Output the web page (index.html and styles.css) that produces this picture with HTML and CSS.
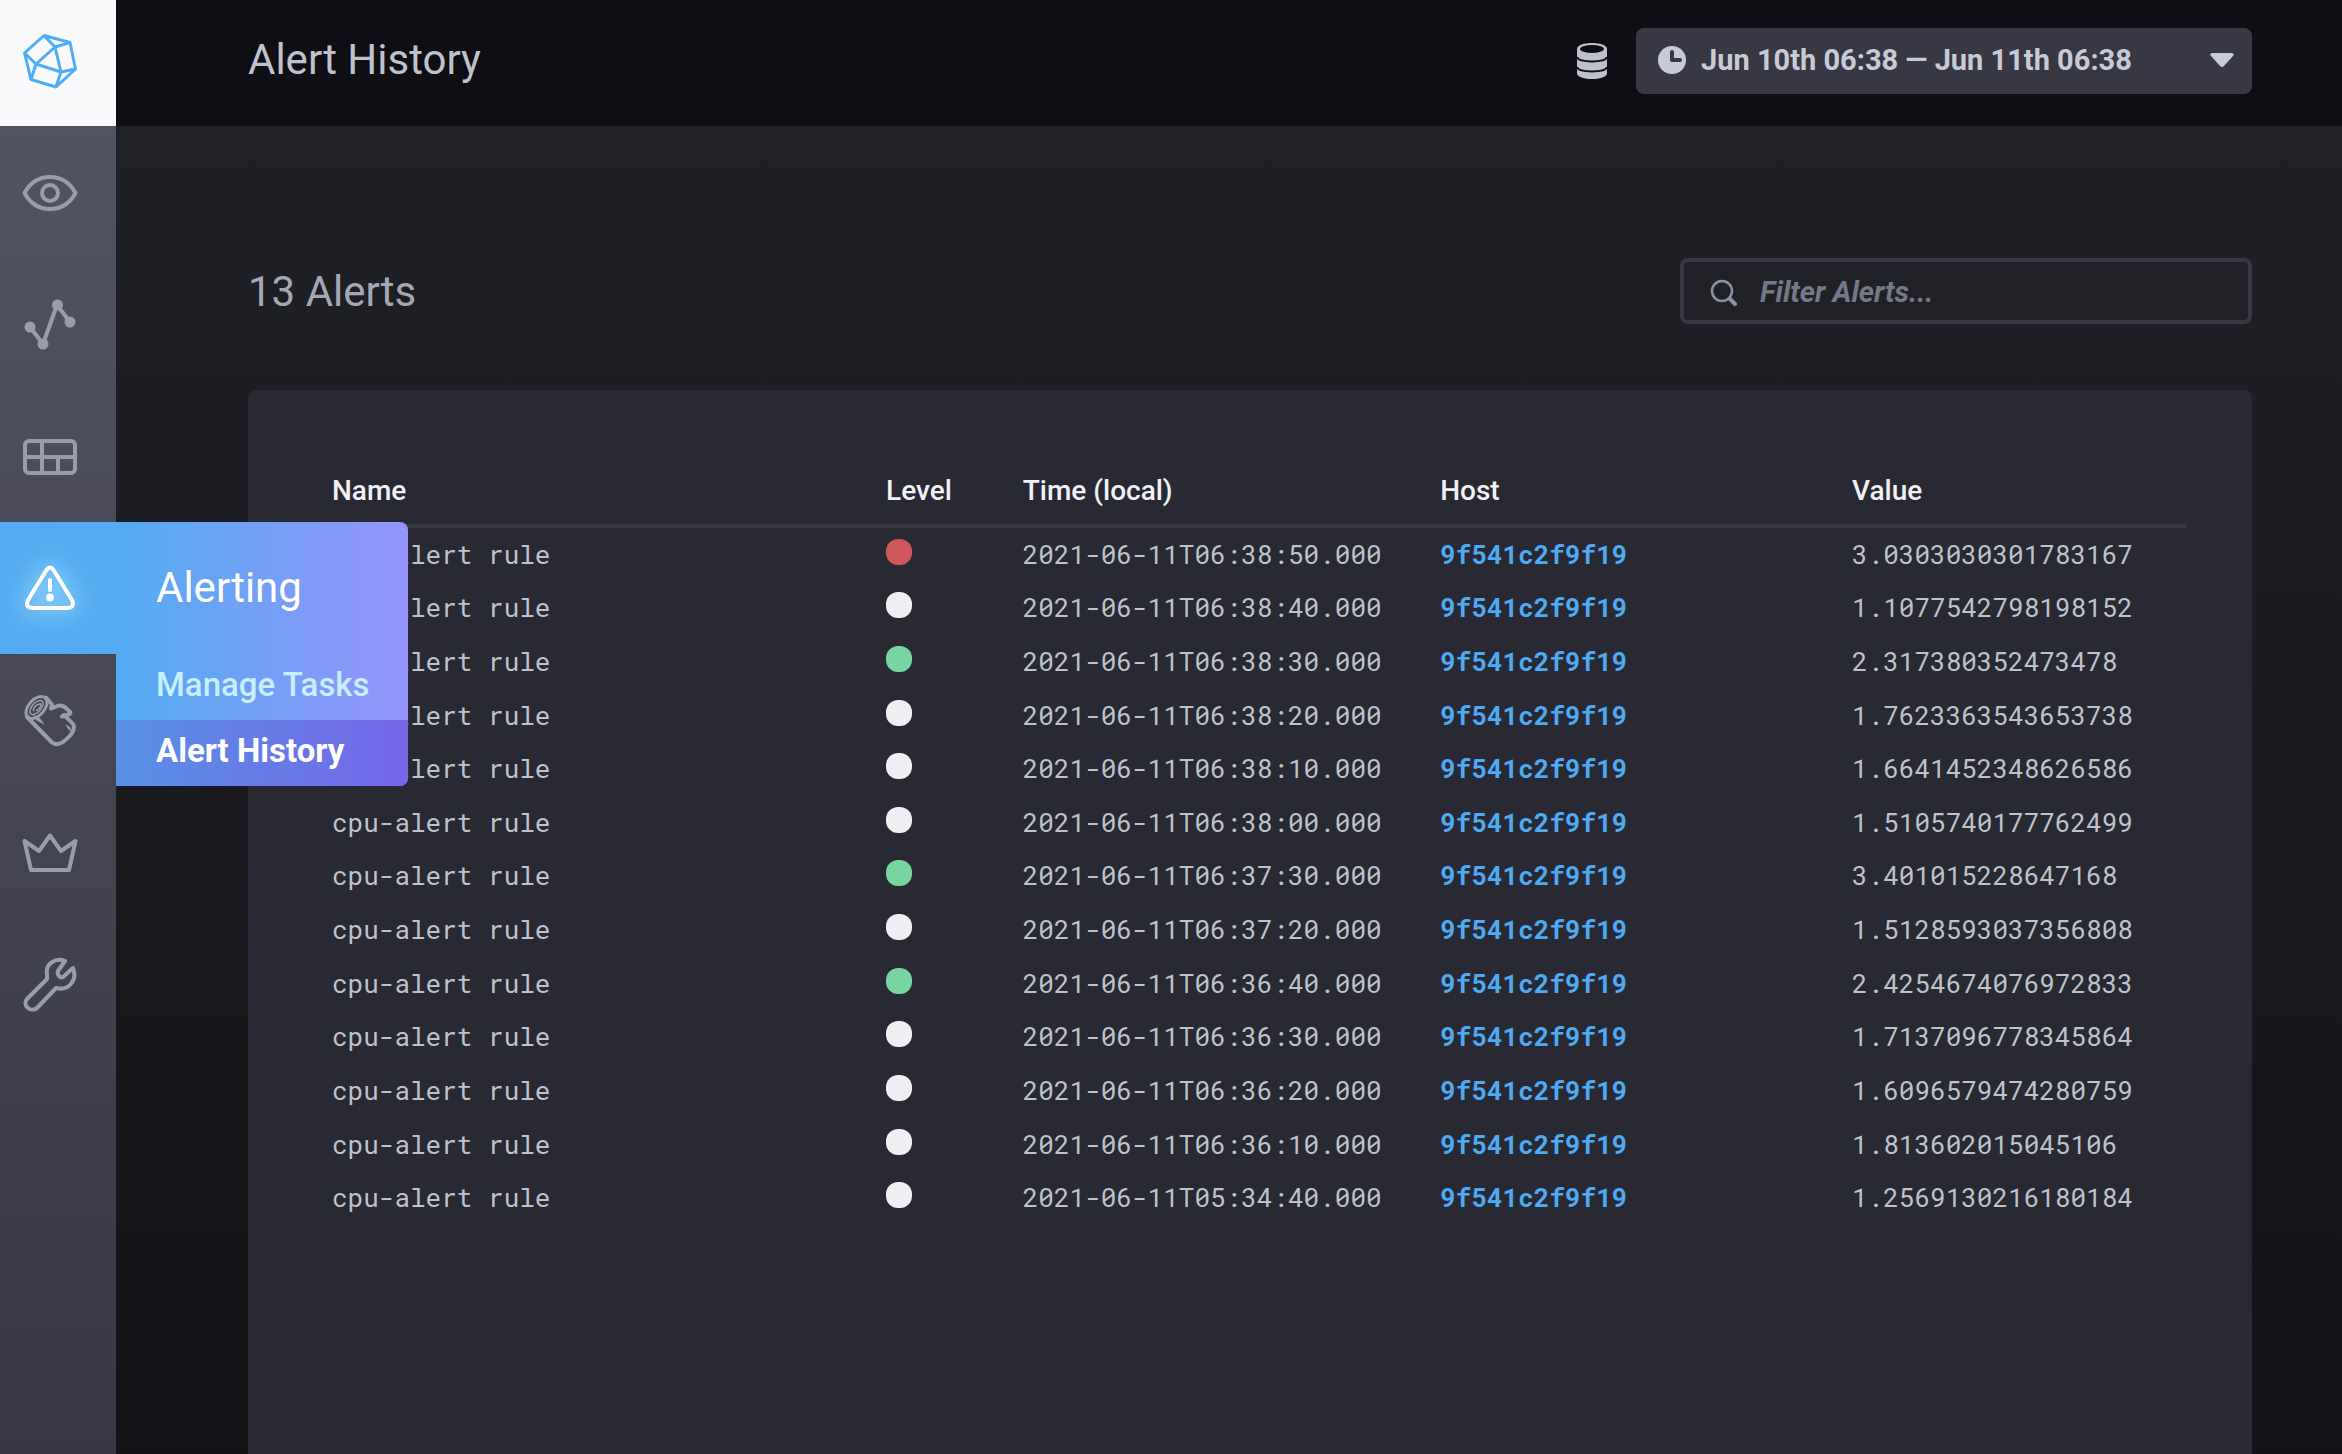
FILE: index.html
```html
<!DOCTYPE html>
<html lang="en">
<head>
<meta charset="utf-8">
<title>Alert History</title>
<link rel="stylesheet" href="styles.css">
</head>
<body>
<div class="app">
  <nav class="sidebar" aria-label="Main">
    <a class="logo" href="#" aria-label="Home">
      <svg class="icon" viewBox="0 0 56 56" fill="none" stroke="currentColor" stroke-width="3" stroke-linejoin="round">
        <path d="M22 2.500L48 9.500L53.500 36L34 54L9 46.500L2.500 20Z"/>
        <path d="M22 2.500L33 14L48 9.500M33 14L39 39L53.500 36M39 39L34 54M39 39L14 31L9 46.500M14 31L2.500 20M14 31L33 14"/>
      </svg>
    </a>
    <div class="nav-item">
      <a class="nav-link" href="#" aria-label="Hosts">
        <svg class="icon" viewBox="0 0 56 56" fill="none" stroke="currentColor" stroke-width="4" stroke-linejoin="round">
          <path d="M2.500 28C8 18 17 12 28 12S48 18 53.500 28C48 38 39 44 28 44S8 38 2.500 28Z"/>
          <circle cx="28" cy="28" r="8"/>
        </svg>
      </a>
    </div>
    <div class="nav-item">
      <a class="nav-link" href="#" aria-label="Explore">
        <svg class="icon" viewBox="0 0 56 56" fill="currentColor" stroke="currentColor" stroke-width="3">
          <path fill="none" d="M8 30L21 47L35 8L48 25" stroke-width="4"/>
          <circle cx="8" cy="30" r="4"/><circle cx="21" cy="47" r="4"/><circle cx="35.500" cy="8" r="4"/><circle cx="48" cy="25" r="4"/>
        </svg>
      </a>
    </div>
    <div class="nav-item">
      <a class="nav-link" href="#" aria-label="Dashboards">
        <svg class="icon" viewBox="0 0 56 56" fill="none" stroke="currentColor" stroke-width="4">
          <rect x="3" y="12" width="50" height="32" rx="4"/>
          <path d="M3 28H53M20 12V44M36 28V44"/>
        </svg>
      </a>
    </div>
    <div class="nav-item nav-item-active">
      <a class="nav-link" href="#" aria-label="Alerting">
        <svg class="icon" viewBox="0 0 56 56" fill="none" stroke="currentColor" stroke-width="4" stroke-linecap="round" stroke-linejoin="round">
          <path d="M24.500 9Q28 4 31.500 9L50 39Q53 46 46 47H10Q3 46 6 39Z"/>
          <path d="M28 19V29"/><circle cx="28" cy="36.500" r="2"/>
        </svg>
      </a>
      <div class="menu">
        <a class="menu-title" href="#">Alerting</a>
        <a class="menu-link" href="#">Manage Tasks</a>
        <a class="menu-link menu-link-active" href="#" aria-current="page">Alert History</a>
      </div>
    </div>
    <div class="nav-item">
      <a class="nav-link" href="#" aria-label="Log Viewer">
        <svg class="icon" viewBox="0 0 56 56" fill="none" stroke="currentColor" stroke-width="4" stroke-linejoin="round">
          <path d="M5 24L30 49.500Q34 53 41 49Q52 41 52 34Q52 31 46 26L42 22" stroke-linecap="round"/>
          <path d="M24 4.500L30 11.500L29 15.500L37 12.500Q41 12 45 16Q50 20 47.500 21L40 23.500" stroke-linecap="round"/>
          <ellipse cx="14.500" cy="14.500" rx="13" ry="8" transform="rotate(-48 14.500 14.500)" stroke-width="3"/>
          <ellipse cx="14.500" cy="14.500" rx="8.500" ry="4.500" transform="rotate(-48 14.500 14.500)" stroke-width="1.500"/>
          <path d="M12 18C10 17 14 10 19 11C19 14 16 18 14 17" stroke-width="1.500"/>
          <path d="M11 22L17 24L23 32L14 27ZM43 31L48 34L50 39L46 36Z" fill="currentColor" stroke="none"/>
        </svg>
      </a>
    </div>
    <div class="nav-item">
      <a class="nav-link" href="#" aria-label="Admin">
        <svg class="icon" viewBox="0 0 56 56" fill="none" stroke="currentColor" stroke-width="4" stroke-linejoin="round">
          <path d="M2.500 16L17 26L28 10.500L39 26L53.500 16L47 45H9Z"/>
        </svg>
      </a>
    </div>
    <div class="nav-item">
      <a class="nav-link" href="#" aria-label="Configuration">
        <svg class="icon" viewBox="0 0 56 56" fill="none" stroke="currentColor" stroke-width="4" stroke-linecap="round" stroke-linejoin="round">
          <path d="M43 4C34 0 23 7 25 17V22L5 42C0 48 8 56 15 51L34 31C46 34 56 24 51 11L41 20Q39 21 37 19Q35 17 36 14Z"/>
        </svg>
      </a>
    </div>
  </nav>

  <main class="page">
    <header class="page-header">
      <h1 class="page-title">Alert History</h1>
      <div class="page-tools">
        <button class="source-button" type="button" aria-label="Sources">
          <svg class="source-icon" viewBox="0 0 32 36">
            <path fill="currentColor" d="M1 6C1 -2 31 -2 31 6V30C31 38 1 38 1 30Z"/>
            <ellipse class="source-cut" cx="16" cy="6" rx="12" ry="4"/>
            <path class="source-line" d="M1 14C3 20 29 20 31 14M1 24C3 30 29 30 31 24"/>
          </svg>
        </button>
        <button class="range-button" type="button">
          <svg class="range-icon" viewBox="0 0 28 28"><circle cx="14" cy="14" r="14" fill="currentColor"/><path class="range-hands" d="M14 6V14H22"/></svg>
          <span class="range-text">Jun 10th 06:38 — Jun 11th 06:38</span>
          <svg class="caret" viewBox="0 0 24 14"><path fill="currentColor" d="M2 0H22Q25 1 23 3L14 13Q12 15 10 13L1 3Q-1 1 2 0Z"/></svg>
        </button>
      </div>
    </header>

    <section class="content">
      <div class="content-bar">
        <h2 class="count">13 Alerts</h2>
        <label class="filter">
          <svg class="filter-icon" viewBox="0 0 28 28" fill="none" stroke="currentColor" stroke-linecap="round"><circle cx="12" cy="13" r="10" stroke-width="2.500"/><path d="M20 21L25 26" stroke-width="4"/></svg>
          <input class="filter-input" type="text" placeholder="Filter Alerts..." aria-label="Filter Alerts">
        </label>
      </div>
      <div class="panel">
        <table class="alerts">
          <colgroup><col class="col-name"><col class="col-level"><col class="col-time"><col class="col-host"><col class="col-value"></colgroup>
          <thead><tr><th>Name</th><th>Level</th><th>Time (local)</th><th>Host</th><th>Value</th></tr></thead>
          <tbody>
            <tr><td>cpu-alert rule</td><td><span class="dot dot-critical"></span></td><td>2021-06-11T06:38:50.000</td><td><a class="host" href="#">9f541c2f9f19</a></td><td>3.0303030301783167</td></tr>
            <tr><td>cpu-alert rule</td><td><span class="dot"></span></td><td>2021-06-11T06:38:40.000</td><td><a class="host" href="#">9f541c2f9f19</a></td><td>1.1077542798198152</td></tr>
            <tr><td>cpu-alert rule</td><td><span class="dot dot-ok"></span></td><td>2021-06-11T06:38:30.000</td><td><a class="host" href="#">9f541c2f9f19</a></td><td>2.317380352473478</td></tr>
            <tr><td>cpu-alert rule</td><td><span class="dot"></span></td><td>2021-06-11T06:38:20.000</td><td><a class="host" href="#">9f541c2f9f19</a></td><td>1.7623363543653738</td></tr>
            <tr><td>cpu-alert rule</td><td><span class="dot"></span></td><td>2021-06-11T06:38:10.000</td><td><a class="host" href="#">9f541c2f9f19</a></td><td>1.6641452348626586</td></tr>
            <tr><td>cpu-alert rule</td><td><span class="dot"></span></td><td>2021-06-11T06:38:00.000</td><td><a class="host" href="#">9f541c2f9f19</a></td><td>1.5105740177762499</td></tr>
            <tr><td>cpu-alert rule</td><td><span class="dot dot-ok"></span></td><td>2021-06-11T06:37:30.000</td><td><a class="host" href="#">9f541c2f9f19</a></td><td>3.401015228647168</td></tr>
            <tr><td>cpu-alert rule</td><td><span class="dot"></span></td><td>2021-06-11T06:37:20.000</td><td><a class="host" href="#">9f541c2f9f19</a></td><td>1.5128593037356808</td></tr>
            <tr><td>cpu-alert rule</td><td><span class="dot dot-ok"></span></td><td>2021-06-11T06:36:40.000</td><td><a class="host" href="#">9f541c2f9f19</a></td><td>2.4254674076972833</td></tr>
            <tr><td>cpu-alert rule</td><td><span class="dot"></span></td><td>2021-06-11T06:36:30.000</td><td><a class="host" href="#">9f541c2f9f19</a></td><td>1.7137096778345864</td></tr>
            <tr><td>cpu-alert rule</td><td><span class="dot"></span></td><td>2021-06-11T06:36:20.000</td><td><a class="host" href="#">9f541c2f9f19</a></td><td>1.6096579474280759</td></tr>
            <tr><td>cpu-alert rule</td><td><span class="dot"></span></td><td>2021-06-11T06:36:10.000</td><td><a class="host" href="#">9f541c2f9f19</a></td><td>1.813602015045106</td></tr>
            <tr><td>cpu-alert rule</td><td><span class="dot"></span></td><td>2021-06-11T05:34:40.000</td><td><a class="host" href="#">9f541c2f9f19</a></td><td>1.2569130216180184</td></tr>
          </tbody>
        </table>
      </div>
    </section>
  </main>
</div>
</body>
</html>
```
FILE: styles.css
```css
* { box-sizing: border-box; }

body {
  margin: 0;
  font-family: Roboto, sans-serif;
  background: #121217;
  color: #bec2cc;
}

a { text-decoration: none; color: inherit; }
button { border: 0; margin: 0; font: inherit; color: inherit; }
h1, h2 { margin: 0; font-weight: 400; }
svg { display: block; }

.app { display: flex; min-height: 100vh; }

/* Sidebar */
.sidebar {
  flex: 0 0 116px;
  background: linear-gradient(#555664 0%, #383744 100%);
  color: #999dab;
}
.logo,
.nav-link {
  display: flex;
  align-items: center;
  justify-content: center;
  padding-right: 16px;
}
.logo { height: 126px; background: #fafafc; color: #4eadf5; padding-bottom: 4px; }
.nav-link { height: 132px; padding-top: 2px; }
.icon { width: 56px; height: 56px; }
.nav-item { position: relative; }
.nav-item-active { z-index: 1; background: #53abf1; color: #fff; }
.nav-item-active .icon {
  filter: drop-shadow(0 0 10px #b4e6ff) drop-shadow(0 0 16px #7cc8f8);
}

.menu {
  position: absolute;
  left: 100%;
  top: 0;
  width: 292px;
  overflow: hidden;
  border-radius: 0 8px 8px 0;
  background: linear-gradient(90deg, #53abf1, #9394fa);
}
.menu-title, .menu-link { display: block; padding-left: 40px; white-space: nowrap; }
.menu-title { font-size: 42px; line-height: 132px; }
.menu-link {
  height: 66px;
  font-size: 33px;
  line-height: 62px;
  font-weight: 500;
  color: #c6f0ff;
}
.menu-link-active {
  font-weight: 700;
  color: #fff;
  background: linear-gradient(90deg, #5891e6, #7566e8);
}

/* Page */
.page {
  flex: 1;
  min-width: 0;
  display: flex;
  flex-direction: column;
  background: linear-gradient(#202126 126px, #121217 100%);
}
.page-header {
  display: flex;
  align-items: center;
  justify-content: space-between;
  height: 126px;
  padding: 0 90px 4px 132px;
  background: #0f0e14;
}
.page-title { font-size: 42px; line-height: 48px; padding-bottom: 2px; }
.page-tools { display: flex; align-items: center; gap: 28px; }
.source-button { padding: 0; background: none; }
.source-icon { width: 32px; height: 36px; }
.source-cut { fill: #0f0e14; }
.source-line { fill: none; stroke: #0f0e14; stroke-width: 2; }
.range-button {
  display: flex;
  align-items: center;
  width: 616px;
  height: 66px;
  padding: 0 18px 2px 22px;
  border-radius: 8px;
  background: #383744;
  color: #c8cbd6;
  font-size: 29px;
  font-weight: 700;
  text-align: left;
}
.range-icon { width: 28px; height: 28px; margin-right: 15px; }
.range-hands { fill: none; stroke: #383744; stroke-width: 4; stroke-linecap: round; stroke-linejoin: round; }
.range-text { flex: 1; }
.caret { width: 24px; height: 14px; }

.content {
  flex: 1;
  display: flex;
  flex-direction: column;
  gap: 66px;
  padding: 132px 90px 0 132px;
}
.content-bar { display: flex; align-items: center; justify-content: space-between; }
.count { font-size: 42px; line-height: 48px; padding-top: 2px; color: #a4a8b6; }
.filter {
  display: flex;
  align-items: center;
  width: 572px;
  height: 66px;
  padding: 2px 26px 0;
  gap: 22px;
  border: 4px solid #383744;
  border-radius: 8px;
  background: #202126;
  color: #8e91a1;
}
.filter-icon { width: 28px; height: 28px; }
.filter-input {
  flex: 1;
  min-width: 0;
  padding: 0;
  border: 0;
  outline: 0;
  background: none;
  font: 700 29px/32px Roboto, sans-serif;
  color: #c8cbd6;
}
.filter-input::placeholder { color: #757888; font-style: italic; opacity: 1; }

.panel {
  flex: 1;
  padding: 66px;
  border-radius: 8px 8px 0 0;
  background: #292933;
}

.alerts {
  width: 100%;
  height: 769px;
  table-layout: fixed;
  border-collapse: separate;
  border-spacing: 0;
}
.col-name { width: 29.6%; }
.col-level { width: 7.3%; }
.col-time { width: 22.3%; }
.col-host { width: 22%; }
.alerts th, .alerts td { padding: 0 0 0 18px; text-align: left; white-space: nowrap; }
.alerts th {
  height: 72px;
  border-bottom: 4px solid #383744;
  font-size: 28px;
  font-weight: 500;
  color: #f0f1f5;
}
.alerts td {
  padding-bottom: 2px;
  font: 26px/32px "Roboto Mono", "DejaVu Sans Mono", monospace;
  color: #bec2cc;
}
.alerts .host { font-weight: 700; color: #4eaaf2; }
.dot {
  display: block;
  width: 26px;
  height: 26px;
  margin-bottom: 4px;
  border-radius: 12px;
  background: #eeeff2;
}
.dot-critical { background: #cd575a; }
.dot-ok { background: #78d5a2; }
```
